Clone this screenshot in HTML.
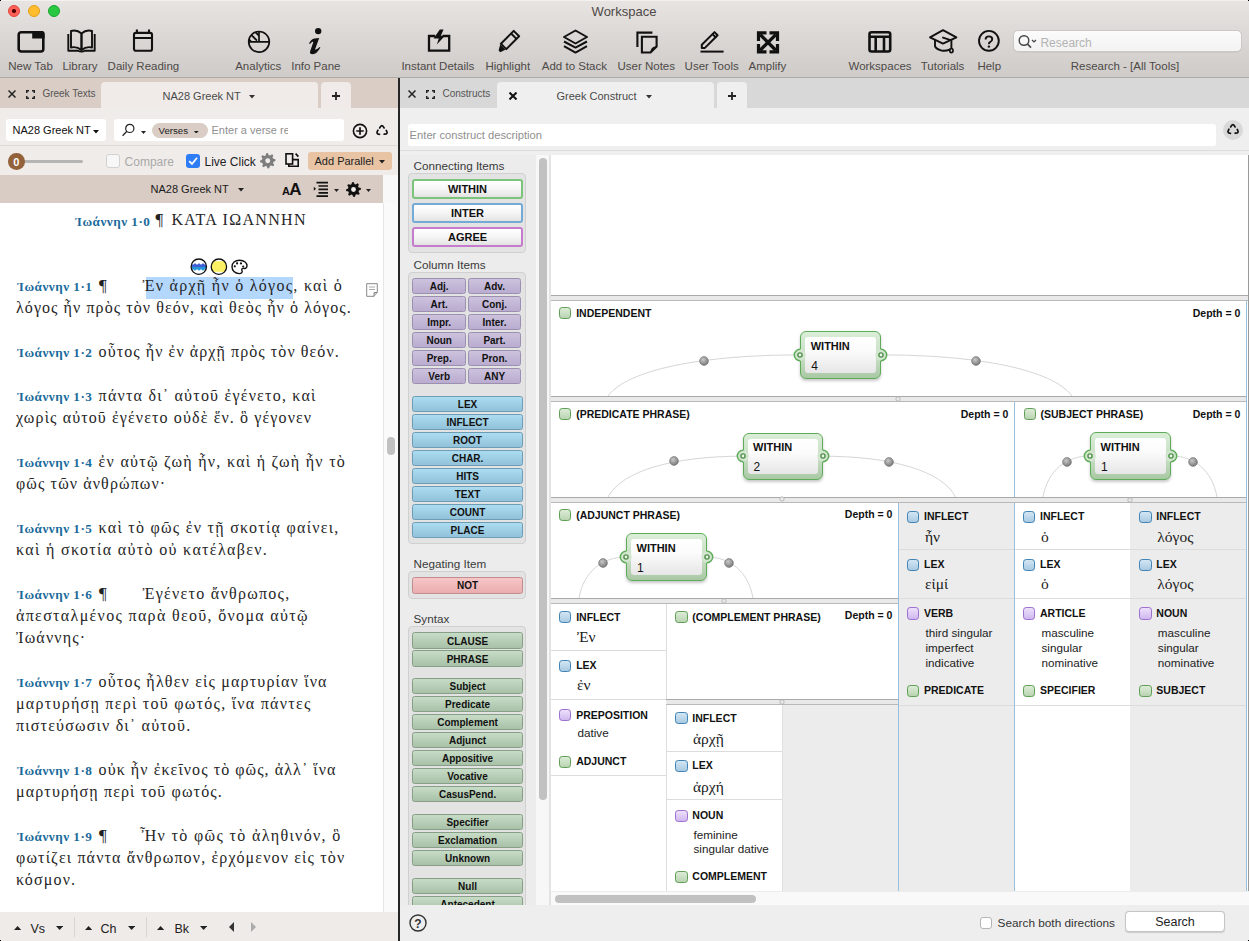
<!DOCTYPE html><html><head><meta charset="utf-8"><style>
html,body{margin:0;padding:0;}
body{width:1249px;height:941px;overflow:hidden;position:relative;background:#efefef;font-family:"Liberation Sans",sans-serif;}
.t{position:absolute;white-space:nowrap;}
.r{position:absolute;box-sizing:border-box;}
</style></head><body>
<div class="r" style="left:0px;top:0px;width:1249px;height:77px;background:linear-gradient(#e8e4e1,#dcd8d5 45%,#cfcbc8);"></div>
<div class="r" style="left:0px;top:77px;width:1249px;height:1px;background:#aeaaa7;"></div>
<div class="r" style="left:0px;top:0px;width:1249px;height:1px;background:#f4f2f0;"></div>
<div class="r" style="left:8px;top:5px;width:12px;height:12px;border-radius:50%;background:#fe5f57;border:0.5px solid #e2463f;"></div>
<div class="r" style="left:28px;top:5px;width:12px;height:12px;border-radius:50%;background:#febc2e;border:0.5px solid #e1a116;"></div>
<div class="r" style="left:48px;top:5px;width:12px;height:12px;border-radius:50%;background:#28c840;border:0.5px solid #17a52e;"></div>
<div class="r" style="left:12.3px;top:9.3px;width:3.4px;height:3.4px;border-radius:50%;background:#4d0000;"></div>
<div class="t" style="left:324.00px;width:600px;text-align:center;top:4.50px;font-size:13px;line-height:13px;color:#4d4948;font-weight:normal;font-family:'Liberation Sans', sans-serif;">Workspace</div>
<div class="t" style="left:8.30px;top:61.27px;font-size:11.5px;line-height:11.5px;color:#4d4a48;font-weight:normal;font-family:'Liberation Sans', sans-serif;">New Tab</div>
<div class="t" style="left:62.40px;top:61.27px;font-size:11.5px;line-height:11.5px;color:#4d4a48;font-weight:normal;font-family:'Liberation Sans', sans-serif;">Library</div>
<div class="t" style="left:107.60px;top:61.27px;font-size:11.5px;line-height:11.5px;color:#4d4a48;font-weight:normal;font-family:'Liberation Sans', sans-serif;">Daily Reading</div>
<div class="t" style="left:235.20px;top:61.27px;font-size:11.5px;line-height:11.5px;color:#4d4a48;font-weight:normal;font-family:'Liberation Sans', sans-serif;">Analytics</div>
<div class="t" style="left:291.20px;top:61.27px;font-size:11.5px;line-height:11.5px;color:#4d4a48;font-weight:normal;font-family:'Liberation Sans', sans-serif;">Info Pane</div>
<div class="t" style="left:401.40px;top:61.27px;font-size:11.5px;line-height:11.5px;color:#4d4a48;font-weight:normal;font-family:'Liberation Sans', sans-serif;">Instant Details</div>
<div class="t" style="left:485.40px;top:61.27px;font-size:11.5px;line-height:11.5px;color:#4d4a48;font-weight:normal;font-family:'Liberation Sans', sans-serif;">Highlight</div>
<div class="t" style="left:541.80px;top:61.27px;font-size:11.5px;line-height:11.5px;color:#4d4a48;font-weight:normal;font-family:'Liberation Sans', sans-serif;">Add to Stack</div>
<div class="t" style="left:617.50px;top:61.27px;font-size:11.5px;line-height:11.5px;color:#4d4a48;font-weight:normal;font-family:'Liberation Sans', sans-serif;">User Notes</div>
<div class="t" style="left:684.60px;top:61.27px;font-size:11.5px;line-height:11.5px;color:#4d4a48;font-weight:normal;font-family:'Liberation Sans', sans-serif;">User Tools</div>
<div class="t" style="left:748.60px;top:61.27px;font-size:11.5px;line-height:11.5px;color:#4d4a48;font-weight:normal;font-family:'Liberation Sans', sans-serif;">Amplify</div>
<div class="t" style="left:848.50px;top:61.27px;font-size:11.5px;line-height:11.5px;color:#4d4a48;font-weight:normal;font-family:'Liberation Sans', sans-serif;">Workspaces</div>
<div class="t" style="left:920.70px;top:61.27px;font-size:11.5px;line-height:11.5px;color:#4d4a48;font-weight:normal;font-family:'Liberation Sans', sans-serif;">Tutorials</div>
<div class="t" style="left:977.40px;top:61.27px;font-size:11.5px;line-height:11.5px;color:#4d4a48;font-weight:normal;font-family:'Liberation Sans', sans-serif;">Help</div>
<div class="t" style="left:1070.70px;top:61.27px;font-size:11.5px;line-height:11.5px;color:#4d4a48;font-weight:normal;font-family:'Liberation Sans', sans-serif;">Research - [All Tools]</div>
<svg class="r" style="left:16px;top:29px;" width="30" height="26" viewBox="0 0 30 26"><rect x="2.7" y="3.3" width="24.6" height="19.2" rx="2.5" fill="none" stroke="#111" stroke-width="2.6"/><path d="M16.2 2 H25.8 Q28.6 2 28.6 4.8 V9.4 H16.2 Z" fill="#111"/></svg>
<svg class="r" style="left:66px;top:29px;" width="32" height="25" viewBox="0 0 32 25"><g fill="none" stroke="#111" stroke-width="1.9" stroke-linejoin="round"><path d="M15.5 4.5 C12.5 1.8 8 1.2 5 2 V18.5 C8 17.8 12.5 18.5 15.5 21 Z"/><path d="M15.5 4.5 C18.5 1.8 23 1.2 26 2 V18.5 C23 17.8 18.5 18.5 15.5 21 Z"/><path d="M2.3 5 V21.8 H12.5 C13.5 22.8 17.5 22.8 18.5 21.8 H28.7 V5"/></g></svg>
<svg class="r" style="left:132px;top:28px;" width="23" height="26" viewBox="0 0 23 26"><g fill="none" stroke="#111" stroke-width="2.1"><rect x="2" y="4.9" width="18" height="17.9" rx="1.8"/><path d="M2 10 H20 M4.9 1.6 V5 M17 1.6 V5"/></g></svg>
<svg class="r" style="left:246px;top:29px;" width="26" height="26" viewBox="0 0 26 26"><defs><clipPath id="q"><path d="M13 12.8 H2.7 A10.3 10.3 0 0 1 13 2.5 Z"/></clipPath></defs><g fill="none" stroke="#111"><circle cx="13" cy="12.8" r="10.3" stroke-width="1.7"/><path d="M2.7 12.8 H23.3 M13 2.5 V12.8" stroke-width="1.7"/><g clip-path="url(#q)" stroke-width="1.9"><path d="M0.5 8 L6.5 14 M3.5 4.2 L11 11.7 M7.5 1.2 L14 7.7"/></g></g></svg>
<svg class="r" style="left:304px;top:26px;" width="22" height="30" viewBox="0 0 22 30"><circle cx="14.2" cy="5.1" r="3.2" fill="#111"/><path d="M5 17.4 Q7.2 13 10.4 12.5 L15.2 12.1 L11.3 22.8 Q11 24 12 23.6 Q14 22.6 15.6 21 L16.4 21.6 Q12.8 28.3 8.6 28.3 Q5.2 28.3 6.2 25 L9.2 16.6 Q9.5 15.4 8.4 15.8 Q7 16.6 5.9 18 Z" fill="#111"/></svg>
<svg class="r" style="left:426px;top:28px;" width="26" height="26" viewBox="0 0 26 26"><path d="M9.2 8 H3 V22.6 H23.2 V8 H16.5" fill="none" stroke="#111" stroke-width="2.3"/><path d="M13.8 1.6 H17.6 L14.8 7.8 H19 L10.8 16.6 L12.8 10.4 H7.6 Z" fill="#111"/></svg>
<svg class="r" style="left:497px;top:29px;" width="25" height="25" viewBox="0 0 25 25"><g fill="none" stroke="#111" stroke-width="2" stroke-linejoin="round"><path d="M3.9 14.7 L16.7 1.9 L22.1 7.3 L9.3 20.1 Z"/><path d="M14.1 4.5 L19.5 9.9"/></g><path d="M3.2 15.6 L8.4 20.8 L3.2 23.2 L1.6 21.6 Z" fill="#111"/></svg>
<svg class="r" style="left:562px;top:29px;" width="27" height="26" viewBox="0 0 27 26"><g fill="none" stroke="#111" stroke-width="2" stroke-linejoin="round"><path d="M13.5 1.5 L25 8 L13.5 14.5 L2 8 Z"/><path d="M2 12.5 L13.5 18.6 L25 12.5"/><path d="M2 17.2 L13.5 23.6 L25 17.2"/></g></svg>
<svg class="r" style="left:635px;top:30px;" width="26" height="25" viewBox="0 0 26 25"><g fill="none" stroke="#111" stroke-width="2.1"><path d="M2.4 17 V2.6 H17.4"/><path d="M6.9 6.8 H21.6 V16.5 L15.5 22.5 H6.9 Z"/><path d="M16.3 22 Q16.3 17.2 21.3 17.2" stroke-width="1.6"/></g></svg>
<svg class="r" style="left:699px;top:30px;" width="27" height="25" viewBox="0 0 27 25"><g fill="none" stroke="#111" stroke-width="2" stroke-linejoin="round"><path d="M2.8 14.8 L13.5 4.1 L16.6 7.2 L5.9 17.9 H2.8 Z"/><path d="M13.5 4.1 L15.5 2.1 L18.6 5.2 L16.6 7.2"/></g><path d="M1.5 21.6 H24.6" stroke="#111" stroke-width="2"/></svg>
<svg class="r" style="left:755px;top:30px;" width="26" height="25" viewBox="0 0 26 25"><g fill="none" stroke="#111" stroke-width="3.2" stroke-linejoin="miter"><path d="M3.5 11 V2.9 H11.5"/><path d="M14.5 2.9 H22.5 V11"/><path d="M3.5 14 V21.9 H11.5"/><path d="M14.5 21.9 H22.5 V14"/></g><path d="M5.2 4.6 L20.8 20.2 M20.8 4.6 L5.2 20.2" stroke="#111" stroke-width="3.4"/></svg>
<svg class="r" style="left:866px;top:30px;" width="27" height="25" viewBox="0 0 27 25"><g fill="none" stroke="#111" stroke-width="2.6"><rect x="3.5" y="2.3" width="20.7" height="19.2" rx="2"/><path d="M3.5 6.8 H24.2 M9.7 6.8 V21.5 M18 6.8 V21.5"/></g></svg>
<svg class="r" style="left:928px;top:28px;" width="31" height="28" viewBox="0 0 31 28"><g fill="none" stroke="#111" stroke-width="1.9" stroke-linejoin="round" stroke-linecap="round"><path d="M15 2.2 L28.4 9.4 L15 15.6 L2 9.4 Z"/><path d="M7 12.6 V18.6 C10 23.2 17 23.6 21.5 21.6"/><path d="M15 9.6 L23.4 12.4 V20.2"/><ellipse cx="23.4" cy="22.6" rx="1.6" ry="2.1" stroke-width="1.7"/></g></svg>
<svg class="r" style="left:976px;top:29px;" width="26" height="26" viewBox="0 0 26 26"><circle cx="12.9" cy="11.8" r="9.9" fill="none" stroke="#111" stroke-width="1.9"/><path d="M9.6 10.4 Q9.6 7.4 12.9 7.4 Q16.2 7.4 16.2 10.2 Q16.2 12.1 14 13.1 Q12.9 13.6 12.9 15.2" fill="none" stroke="#111" stroke-width="1.9"/><circle cx="12.9" cy="17.6" r="1.2" fill="#111"/></svg>
<div class="r" style="left:1012.5px;top:30px;width:229px;height:22px;border-radius:5px;background:linear-gradient(#fbfbfb,#f3f3f3);border:1px solid #cbc7c4;box-shadow:0 0.5px 0.5px rgba(0,0,0,0.08);"></div>
<svg class="r" style="left:1017px;top:34px;" width="22" height="16" viewBox="0 0 22 16"><circle cx="7" cy="6.5" r="4.8" fill="none" stroke="#444" stroke-width="1.4"/><path d="M10.4 10 L14 13.6" stroke="#444" stroke-width="1.6"/><path d="M15 6 L17 8 L19 6" fill="none" stroke="#444" stroke-width="1.2"/></svg>
<div class="t" style="left:1040.40px;top:36.64px;font-size:12px;line-height:12px;color:#b3b3b3;font-weight:normal;font-family:'Liberation Sans', sans-serif;">Research</div>
<div class="r" style="left:0px;top:78px;width:398px;height:30px;background:#dacdc5;"></div>
<div class="r" style="left:101px;top:82px;width:217px;height:26px;background:#f0ebe8;border-radius:4px 4px 0 0;"></div>
<div class="r" style="left:321px;top:82px;width:30px;height:26px;background:#f0ebe8;border-radius:4px 4px 0 0;"></div>
<svg class="r" style="left:7.5px;top:90px;" width="8" height="8" viewBox="0 0 8 8"><path d="M0.5 0.5 L7.5 7.5 M7.5 0.5 L0.5 7.5" stroke="#222" stroke-width="1.5"/></svg>
<svg class="r" style="left:25.5px;top:89.5px;" width="9" height="9" viewBox="0 0 9 9"><path d="M0.75 3 V0.75 H3 M6 0.75 H8.25 V3 M8.25 6 V8.25 H6 M3 8.25 H0.75 V6" fill="none" stroke="#222" stroke-width="1.5"/></svg>
<div class="t" style="left:42.40px;top:88.93px;font-size:10px;line-height:10px;color:#555;font-weight:normal;font-family:'Liberation Sans', sans-serif;">Greek Texts</div>
<div class="t" style="left:162.50px;top:91.29px;font-size:11px;line-height:11px;color:#4a4a4a;font-weight:normal;font-family:'Liberation Sans', sans-serif;">NA28 Greek NT</div>
<svg class="r" style="left:249px;top:95px;" width="6" height="3.5" viewBox="0 0 6 3.5"><path d="M0 0 H6 L3.0 3.5 Z" fill="#333"/></svg>
<svg class="r" style="left:332.0px;top:92.2px;" width="8" height="8" viewBox="0 0 8 8"><path d="M4.0 0 V8 M0 4.0 H8" stroke="#222" stroke-width="1.8"/></svg>
<div class="r" style="left:0px;top:108px;width:398px;height:67px;background:#f0ecea;"></div>
<div class="r" style="left:6px;top:119px;width:100px;height:22px;background:#fff;border-radius:3px;"></div>
<div class="t" style="left:12.50px;top:125.29px;font-size:11px;line-height:11px;color:#111;font-weight:normal;font-family:'Liberation Sans', sans-serif;">NA28 Greek NT</div>
<svg class="r" style="left:92.5px;top:130px;" width="6" height="3.5" viewBox="0 0 6 3.5"><path d="M0 0 H6 L3.0 3.5 Z" fill="#111"/></svg>
<div class="r" style="left:114px;top:119px;width:230px;height:22px;background:#fff;border-radius:3px;"></div>
<svg class="r" style="left:121px;top:123px;" width="16" height="15" viewBox="0 0 16 15"><circle cx="8.8" cy="5.4" r="4.1" fill="none" stroke="#222" stroke-width="1.2"/><path d="M5.9 8.3 L1.6 12.7" stroke="#222" stroke-width="1.3"/></svg>
<svg class="r" style="left:141px;top:131px;" width="5" height="3" viewBox="0 0 5 3"><path d="M0 0 H5 L2.5 3 Z" fill="#222"/></svg>
<div class="r" style="left:151.5px;top:123px;width:56px;height:14.5px;background:#dacdc5;border-radius:8px;"></div>
<div class="t" style="left:158.60px;top:125.87px;font-size:9.6px;line-height:9.6px;color:#222;font-weight:normal;font-family:'Liberation Sans', sans-serif;">Verses</div>
<svg class="r" style="left:194.4px;top:130.6px;" width="4.6" height="2.8" viewBox="0 0 4.6 2.8"><path d="M0 0 H4.6 L2.3 2.8 Z" fill="#222"/></svg>
<div class="r" style="left:211px;top:119px;width:77px;height:22px;overflow:hidden;">
<div class="t" style="left:0.50px;top:5.89px;font-size:11px;line-height:11px;color:#8f8f8f;font-weight:normal;font-family:'Liberation Sans', sans-serif;">Enter a verse reference</div>
</div>
<svg class="r" style="left:352px;top:123px;" width="16" height="16" viewBox="0 0 16 16"><circle cx="8" cy="8" r="6.6" fill="none" stroke="#111" stroke-width="1.6"/><path d="M8 4.3 V11.7 M4.3 8 H11.7" stroke="#111" stroke-width="1.7"/></svg>
<svg class="r" style="left:374px;top:123px;" width="16" height="14" viewBox="0 0 16 14"><g fill="none" stroke="#111" stroke-width="1.7" stroke-linecap="round"><path d="M5.7 4.9 Q7.9 0.5 10.1 4.9"/><path d="M3.9 7.2 Q1.4 11.3 5.5 11.3"/><path d="M12.3 7.5 Q14.7 11.3 10.2 11.2"/></g></svg>
<div class="r" style="left:0px;top:145px;width:398px;height:1px;background:#dedad7;"></div>
<div class="r" style="left:16px;top:160px;width:67px;height:3px;background:#b7b5b3;border-radius:2px;"></div>
<div class="r" style="left:8px;top:153px;width:16.6px;height:16.6px;background:#93623a;border-radius:50%;"></div>
<div class="t" style="left:-283.70px;width:600px;text-align:center;top:156.99px;font-size:11px;line-height:11px;color:#fff;font-weight:bold;font-family:'Liberation Sans', sans-serif;">0</div>
<div class="r" style="left:106px;top:154px;width:14px;height:13.5px;background:#f7f7f7;border:1px solid #d2d2d2;border-radius:3px;"></div>
<div class="t" style="left:124.60px;top:156.24px;font-size:12px;line-height:12px;color:#a9a9a9;font-weight:normal;font-family:'Liberation Sans', sans-serif;">Compare</div>
<div class="r" style="left:186px;top:154px;width:14px;height:14px;background:#2f7df6;border-radius:3px;"></div>
<svg class="r" style="left:186px;top:154px;" width="14" height="14" viewBox="0 0 14 14"><path d="M3.2 7.2 L6 10 L11 3.8" fill="none" stroke="#fff" stroke-width="1.8"/></svg>
<div class="t" style="left:204.50px;top:156.24px;font-size:12px;line-height:12px;color:#222;font-weight:normal;font-family:'Liberation Sans', sans-serif;">Live Click</div>
<svg class="r" style="left:260.3px;top:153px;" width="15.5" height="15.5" viewBox="0 0 15.5 15.5"><polygon points="7.75,0.00 9.26,0.15 9.94,2.45 10.94,2.98 13.23,2.27 14.19,3.44 13.05,5.56 13.37,6.63 15.50,7.75 15.35,9.26 13.05,9.94 12.52,10.94 13.23,13.23 12.06,14.19 9.94,13.05 8.87,13.37 7.75,15.50 6.24,15.35 5.56,13.05 4.56,12.52 2.27,13.23 1.31,12.06 2.45,9.94 2.13,8.87 0.00,7.75 0.15,6.24 2.45,5.56 2.98,4.56 2.27,2.27 3.44,1.31 5.56,2.45 6.63,2.13" fill="#7d7d7d" transform="rotate(-11 7.75 7.75)"/><circle cx="7.75" cy="7.75" r="2.48" fill="#f0ecea"/></svg>
<svg class="r" style="left:284px;top:152px;" width="17" height="17" viewBox="0 0 17 17"><g fill="none" stroke="#111" stroke-width="1.6"><rect x="2" y="1.8" width="6.6" height="10.2"/><path d="M8.6 7.6 H14.2 V14.2 H4.8 V12"/><path d="M11.6 1.6 L14.4 4.6"/></g></svg>
<div class="r" style="left:308px;top:152px;width:84px;height:18px;background:#e8c4a4;border-radius:3px;"></div>
<div class="t" style="left:314.50px;top:155.69px;font-size:11px;line-height:11px;color:#222;font-weight:normal;font-family:'Liberation Sans', sans-serif;">Add Parallel</div>
<svg class="r" style="left:378.6px;top:160px;" width="6" height="3.5" viewBox="0 0 6 3.5"><path d="M0 0 H6 L3.0 3.5 Z" fill="#222"/></svg>
<div class="r" style="left:0px;top:175px;width:383px;height:28px;background:#d9ccc4;"></div>
<div class="r" style="left:383px;top:175px;width:15px;height:28px;background:#f8f8f8;"></div>
<div class="t" style="left:150.50px;top:184.29px;font-size:11px;line-height:11px;color:#1a1a1a;font-weight:normal;font-family:'Liberation Sans', sans-serif;">NA28 Greek NT</div>
<svg class="r" style="left:238px;top:188px;" width="6" height="3.5" viewBox="0 0 6 3.5"><path d="M0 0 H6 L3.0 3.5 Z" fill="#222"/></svg>
<div class="t" style="left:282.00px;top:185.89px;font-size:11px;line-height:11px;color:#111;font-weight:bold;font-family:'Liberation Sans', sans-serif;">A</div>
<div class="t" style="left:289.30px;top:180.81px;font-size:17px;line-height:17px;color:#111;font-weight:bold;font-family:'Liberation Sans', sans-serif;">A</div>
<svg class="r" style="left:313px;top:181px;" width="16" height="16" viewBox="0 0 16 16"><path d="M0.8 5.8 L3 7.8 L0.8 9.8 Z" fill="#111"/><g stroke="#111" stroke-width="1.7"><path d="M3.5 1.6 H15 M5.5 5 H15 M5.5 8.4 H15 M5.5 11.8 H15 M3.5 15.2 H15"/></g></svg>
<svg class="r" style="left:334px;top:188.5px;" width="5" height="3" viewBox="0 0 5 3"><path d="M0 0 H5 L2.5 3 Z" fill="#222"/></svg>
<div class="r" style="left:346px;top:182px;width:14px;height:14px;"></div>
<svg class="r" style="left:345.5px;top:181.5px;" width="15" height="15" viewBox="0 0 15 15"><polygon points="7.50,0.00 8.96,0.14 9.62,2.37 10.58,2.89 12.80,2.20 13.74,3.33 12.63,5.38 12.94,6.42 15.00,7.50 14.86,8.96 12.63,9.62 12.11,10.58 12.80,12.80 11.67,13.74 9.62,12.63 8.58,12.94 7.50,15.00 6.04,14.86 5.38,12.63 4.42,12.11 2.20,12.80 1.26,11.67 2.37,9.62 2.06,8.58 0.00,7.50 0.14,6.04 2.37,5.38 2.89,4.42 2.20,2.20 3.33,1.26 5.38,2.37 6.42,2.06" fill="#111" transform="rotate(-11 7.5 7.5)"/><circle cx="7.5" cy="7.5" r="2.4" fill="#f0ecea"/></svg>
<svg class="r" style="left:365.5px;top:188.5px;" width="5" height="3" viewBox="0 0 5 3"><path d="M0 0 H5 L2.5 3 Z" fill="#222"/></svg>
<div class="r" style="left:0px;top:203px;width:383px;height:709px;background:#fff;"></div>
<div class="r" style="left:383px;top:203px;width:15px;height:709px;background:#fafafa;border-left:1px solid #e6e6e6;"></div>
<div class="r" style="left:387px;top:437px;width:8px;height:18px;background:#c1c1c1;border-radius:4px;"></div>
<div class="t" style="left:75.00px;top:214.55px;font-size:13.2px;line-height:13.2px;color:#1b6b9c;font-weight:bold;font-family:'Liberation Serif', serif;letter-spacing:0.5px;">Ἰωάννην 1·0</div>
<div class="t" style="left:155.50px;top:211.36px;font-size:17px;line-height:17px;color:#222;font-weight:normal;font-family:'Liberation Serif', serif;">¶</div>
<div class="t" style="left:171.50px;top:212.20px;font-size:16px;line-height:16px;color:#262626;font-weight:normal;font-family:'Liberation Serif', serif;letter-spacing:1.32px;">ΚΑΤΑ ΙΩΑΝΝΗΝ</div>
<div class="r" style="left:146px;top:277px;width:147px;height:22px;background:#b4d7fe;"></div>
<div class="t" style="left:17.00px;top:280.25px;font-size:13.2px;line-height:13.2px;color:#1b6b9c;font-weight:bold;font-family:'Liberation Serif', serif;letter-spacing:0.5px;">Ἰωάννην 1·1</div>
<div class="t" style="left:99.00px;top:277.06px;font-size:17px;line-height:17px;color:#222;font-weight:normal;font-family:'Liberation Serif', serif;">¶</div>
<div class="t" style="left:142.50px;top:277.90px;font-size:16px;line-height:16px;color:#262626;font-weight:normal;font-family:'Liberation Serif', serif;letter-spacing:1.28px;">Ἐν ἀρχῇ ἦν ὁ λόγος, καὶ ὁ</div>
<div class="t" style="left:16.00px;top:299.90px;font-size:16px;line-height:16px;color:#262626;font-weight:normal;font-family:'Liberation Serif', serif;letter-spacing:1.073px;">λόγος ἦν πρὸς τὸν θεόν, καὶ θεὸς ἦν ὁ λόγος.</div>
<div class="t" style="left:17.00px;top:346.25px;font-size:13.2px;line-height:13.2px;color:#1b6b9c;font-weight:bold;font-family:'Liberation Serif', serif;letter-spacing:0.5px;">Ἰωάννην 1·2</div>
<div class="t" style="left:98.60px;top:343.90px;font-size:16px;line-height:16px;color:#262626;font-weight:normal;font-family:'Liberation Serif', serif;letter-spacing:1.079px;">οὗτος ἦν ἐν ἀρχῇ πρὸς τὸν θεόν.</div>
<div class="t" style="left:17.00px;top:390.25px;font-size:13.2px;line-height:13.2px;color:#1b6b9c;font-weight:bold;font-family:'Liberation Serif', serif;letter-spacing:0.5px;">Ἰωάννην 1·3</div>
<div class="t" style="left:98.60px;top:387.90px;font-size:16px;line-height:16px;color:#262626;font-weight:normal;font-family:'Liberation Serif', serif;letter-spacing:1.221px;">πάντα δι᾽ αὐτοῦ ἐγένετο, καὶ</div>
<div class="t" style="left:16.00px;top:409.90px;font-size:16px;line-height:16px;color:#262626;font-weight:normal;font-family:'Liberation Serif', serif;letter-spacing:1.12px;">χωρὶς αὐτοῦ ἐγένετο οὐδὲ ἕν. ὃ γέγονεν</div>
<div class="t" style="left:17.00px;top:456.25px;font-size:13.2px;line-height:13.2px;color:#1b6b9c;font-weight:bold;font-family:'Liberation Serif', serif;letter-spacing:0.5px;">Ἰωάννην 1·4</div>
<div class="t" style="left:98.60px;top:453.90px;font-size:16px;line-height:16px;color:#262626;font-weight:normal;font-family:'Liberation Serif', serif;letter-spacing:1.285px;">ἐν αὐτῷ ζωὴ ἦν, καὶ ἡ ζωὴ ἦν τὸ</div>
<div class="t" style="left:16.00px;top:475.90px;font-size:16px;line-height:16px;color:#262626;font-weight:normal;font-family:'Liberation Serif', serif;letter-spacing:1.12px;">φῶς τῶν ἀνθρώπων·</div>
<div class="t" style="left:17.00px;top:522.25px;font-size:13.2px;line-height:13.2px;color:#1b6b9c;font-weight:bold;font-family:'Liberation Serif', serif;letter-spacing:0.5px;">Ἰωάννην 1·5</div>
<div class="t" style="left:98.60px;top:519.90px;font-size:16px;line-height:16px;color:#262626;font-weight:normal;font-family:'Liberation Serif', serif;letter-spacing:1.273px;">καὶ τὸ φῶς ἐν τῇ σκοτίᾳ φαίνει,</div>
<div class="t" style="left:16.00px;top:541.90px;font-size:16px;line-height:16px;color:#262626;font-weight:normal;font-family:'Liberation Serif', serif;letter-spacing:1.335px;">καὶ ἡ σκοτία αὐτὸ οὐ κατέλαβεν.</div>
<div class="t" style="left:17.00px;top:588.25px;font-size:13.2px;line-height:13.2px;color:#1b6b9c;font-weight:bold;font-family:'Liberation Serif', serif;letter-spacing:0.5px;">Ἰωάννην 1·6</div>
<div class="t" style="left:99.00px;top:585.06px;font-size:17px;line-height:17px;color:#222;font-weight:normal;font-family:'Liberation Serif', serif;">¶</div>
<div class="t" style="left:142.50px;top:585.90px;font-size:16px;line-height:16px;color:#262626;font-weight:normal;font-family:'Liberation Serif', serif;letter-spacing:1.27px;">Ἐγένετο ἄνθρωπος,</div>
<div class="t" style="left:16.00px;top:607.90px;font-size:16px;line-height:16px;color:#262626;font-weight:normal;font-family:'Liberation Serif', serif;letter-spacing:1.326px;">ἀπεσταλμένος παρὰ θεοῦ, ὄνομα αὐτῷ</div>
<div class="t" style="left:16.00px;top:629.90px;font-size:16px;line-height:16px;color:#262626;font-weight:normal;font-family:'Liberation Serif', serif;letter-spacing:1.16px;">Ἰωάννης·</div>
<div class="t" style="left:17.00px;top:676.25px;font-size:13.2px;line-height:13.2px;color:#1b6b9c;font-weight:bold;font-family:'Liberation Serif', serif;letter-spacing:0.5px;">Ἰωάννην 1·7</div>
<div class="t" style="left:98.60px;top:673.90px;font-size:16px;line-height:16px;color:#262626;font-weight:normal;font-family:'Liberation Serif', serif;letter-spacing:1.178px;">οὗτος ἦλθεν εἰς μαρτυρίαν ἵνα</div>
<div class="t" style="left:16.00px;top:695.90px;font-size:16px;line-height:16px;color:#262626;font-weight:normal;font-family:'Liberation Serif', serif;letter-spacing:1.272px;">μαρτυρήσῃ περὶ τοῦ φωτός, ἵνα πάντες</div>
<div class="t" style="left:16.00px;top:717.90px;font-size:16px;line-height:16px;color:#262626;font-weight:normal;font-family:'Liberation Serif', serif;letter-spacing:1.187px;">πιστεύσωσιν δι᾽ αὐτοῦ.</div>
<div class="t" style="left:17.00px;top:764.25px;font-size:13.2px;line-height:13.2px;color:#1b6b9c;font-weight:bold;font-family:'Liberation Serif', serif;letter-spacing:0.5px;">Ἰωάννην 1·8</div>
<div class="t" style="left:98.60px;top:761.90px;font-size:16px;line-height:16px;color:#262626;font-weight:normal;font-family:'Liberation Serif', serif;letter-spacing:1.073px;">οὐκ ἦν ἐκεῖνος τὸ φῶς, ἀλλ᾽ ἵνα</div>
<div class="t" style="left:16.00px;top:783.90px;font-size:16px;line-height:16px;color:#262626;font-weight:normal;font-family:'Liberation Serif', serif;letter-spacing:1.13px;">μαρτυρήσῃ περὶ τοῦ φωτός.</div>
<div class="t" style="left:17.00px;top:830.25px;font-size:13.2px;line-height:13.2px;color:#1b6b9c;font-weight:bold;font-family:'Liberation Serif', serif;letter-spacing:0.5px;">Ἰωάννην 1·9</div>
<div class="t" style="left:99.00px;top:827.06px;font-size:17px;line-height:17px;color:#222;font-weight:normal;font-family:'Liberation Serif', serif;">¶</div>
<div class="t" style="left:140.00px;top:827.90px;font-size:16px;line-height:16px;color:#262626;font-weight:normal;font-family:'Liberation Serif', serif;letter-spacing:1.35px;">Ἦν τὸ φῶς τὸ ἀληθινόν, ὃ</div>
<div class="t" style="left:16.00px;top:849.90px;font-size:16px;line-height:16px;color:#262626;font-weight:normal;font-family:'Liberation Serif', serif;letter-spacing:1.154px;">φωτίζει πάντα ἄνθρωπον, ἐρχόμενον εἰς τὸν</div>
<div class="t" style="left:16.00px;top:871.90px;font-size:16px;line-height:16px;color:#262626;font-weight:normal;font-family:'Liberation Serif', serif;letter-spacing:1.15px;">κόσμον.</div>
<svg class="r" style="left:190px;top:258px;" width="18" height="18" viewBox="0 0 18 18"><defs><clipPath id="cc"><circle cx="8.8" cy="8.7" r="7.5"/></clipPath></defs><circle cx="8.8" cy="8.7" r="7.6" fill="#fff"/><g clip-path="url(#cc)"><path d="M0 5.9 Q1 4.7 2 5.9 T4 5.9 T6 5.9 T8 5.9 T10 5.9 T12 5.9 T14 5.9 T16 5.9 T18 5.9 V9 H0 Z" fill="#3d5ed4"/><path d="M0 9 H18 V11.9 Q17 13.1 16 11.9 T14 11.9 T12 11.9 T10 11.9 T8 11.9 T6 11.9 T4 11.9 T2 11.9 T0 11.9 Z" fill="#2597d6"/></g><circle cx="8.8" cy="8.7" r="7.7" fill="none" stroke="#111" stroke-width="1.3"/></svg>
<svg class="r" style="left:210px;top:258px;" width="18" height="18" viewBox="0 0 18 18"><defs><clipPath id="cy"><circle cx="8.9" cy="8.7" r="7.5"/></clipPath></defs><circle cx="8.9" cy="8.7" r="7.6" fill="#fff"/><rect x="0" y="3.2" width="18" height="10.6" fill="#fbf064" clip-path="url(#cy)"/><circle cx="8.9" cy="8.7" r="7.7" fill="none" stroke="#111" stroke-width="1.3"/></svg>
<svg class="r" style="left:231px;top:259px;" width="17" height="16" viewBox="0 0 17 16"><path d="M8.5 1.2 C13.5 1.2 16 4 16 7 C16 9.6 13.5 9.6 12.2 9.4 C10.8 9.3 10.4 10.4 11 11.6 C11.6 13 10.8 14.6 8.2 14.6 C3.8 14.6 1 11.5 1 7.8 C1 4 4 1.2 8.5 1.2 Z" fill="#fff" stroke="#111" stroke-width="1.4"/><g fill="#111"><circle cx="6.1" cy="4.4" r="1.1"/><circle cx="10" cy="4.4" r="1.1"/><circle cx="3.8" cy="7.3" r="1.1"/><circle cx="12.2" cy="7.5" r="1.1"/></g></svg>
<svg class="r" style="left:366px;top:283px;" width="12" height="14" viewBox="0 0 12 14"><path d="M0.7 0.7 H11.3 V9.5 L8 13.3 H0.7 Z" fill="#fff" stroke="#888" stroke-width="1"/><path d="M3 4 H9 M3 6.5 H9" stroke="#aaa" stroke-width="1"/><path d="M8 13.3 V9.5 H11.3" fill="#ccc" stroke="#888" stroke-width="1"/></svg>
<div class="r" style="left:0px;top:912px;width:398px;height:29px;background:#efebe8;"></div>
<svg class="r" style="left:14px;top:925.5px;" width="7.2" height="4" viewBox="0 0 7.2 4"><path d="M0 4 H7.2 L3.6 0 Z" fill="#222"/></svg>
<div class="t" style="left:30.50px;top:922.82px;font-size:12.5px;line-height:12.5px;color:#222;font-weight:normal;font-family:'Liberation Sans', sans-serif;">Vs</div>
<svg class="r" style="left:56px;top:926px;" width="7.2" height="4" viewBox="0 0 7.2 4"><path d="M0 0 H7.2 L3.6 4 Z" fill="#222"/></svg>
<div class="r" style="left:74px;top:917px;width:1px;height:20px;background:#d9d5d2;"></div>
<svg class="r" style="left:85.3px;top:925.5px;" width="7.2" height="4" viewBox="0 0 7.2 4"><path d="M0 4 H7.2 L3.6 0 Z" fill="#222"/></svg>
<div class="t" style="left:100.40px;top:922.82px;font-size:12.5px;line-height:12.5px;color:#222;font-weight:normal;font-family:'Liberation Sans', sans-serif;">Ch</div>
<svg class="r" style="left:127.6px;top:926px;" width="7.2" height="4" viewBox="0 0 7.2 4"><path d="M0 0 H7.2 L3.6 4 Z" fill="#222"/></svg>
<div class="r" style="left:146px;top:917px;width:1px;height:20px;background:#d9d5d2;"></div>
<svg class="r" style="left:157.4px;top:925.5px;" width="7.2" height="4" viewBox="0 0 7.2 4"><path d="M0 4 H7.2 L3.6 0 Z" fill="#222"/></svg>
<div class="t" style="left:174.40px;top:922.82px;font-size:12.5px;line-height:12.5px;color:#222;font-weight:normal;font-family:'Liberation Sans', sans-serif;">Bk</div>
<svg class="r" style="left:199.8px;top:926px;" width="7.2" height="4" viewBox="0 0 7.2 4"><path d="M0 0 H7.2 L3.6 4 Z" fill="#222"/></svg>
<svg class="r" style="left:229px;top:922px;" width="5" height="10" viewBox="0 0 5 10"><path d="M5 0 V10 L0 5 Z" fill="#333"/></svg>
<svg class="r" style="left:250.5px;top:922px;" width="5" height="10" viewBox="0 0 5 10"><path d="M0 0 V10 L5 5 Z" fill="#aaa"/></svg>
<div class="r" style="left:398px;top:78px;width:2px;height:863px;background:#262626;"></div>
<div class="r" style="left:400px;top:78px;width:849px;height:30px;background:#d8d8d8;"></div>
<div class="r" style="left:497px;top:82px;width:217px;height:26px;background:#efefef;border-radius:4px 4px 0 0;"></div>
<div class="r" style="left:717px;top:82px;width:30px;height:26px;background:#efefef;border-radius:4px 4px 0 0;"></div>
<svg class="r" style="left:407.5px;top:90px;" width="8" height="8" viewBox="0 0 8 8"><path d="M0.5 0.5 L7.5 7.5 M7.5 0.5 L0.5 7.5" stroke="#222" stroke-width="1.5"/></svg>
<svg class="r" style="left:425.5px;top:89.5px;" width="9" height="9" viewBox="0 0 9 9"><path d="M0.75 3 V0.75 H3 M6 0.75 H8.25 V3 M8.25 6 V8.25 H6 M3 8.25 H0.75 V6" fill="none" stroke="#222" stroke-width="1.5"/></svg>
<div class="t" style="left:442.50px;top:88.93px;font-size:10px;line-height:10px;color:#555;font-weight:normal;font-family:'Liberation Sans', sans-serif;">Constructs</div>
<svg class="r" style="left:509px;top:91.5px;" width="8" height="8" viewBox="0 0 8 8"><path d="M0.5 0.5 L7.5 7.5 M7.5 0.5 L0.5 7.5" stroke="#111" stroke-width="2"/></svg>
<div class="t" style="left:556.50px;top:91.29px;font-size:11px;line-height:11px;color:#4a4a4a;font-weight:normal;font-family:'Liberation Sans', sans-serif;">Greek Construct</div>
<svg class="r" style="left:646px;top:95px;" width="6" height="3.5" viewBox="0 0 6 3.5"><path d="M0 0 H6 L3.0 3.5 Z" fill="#333"/></svg>
<svg class="r" style="left:728.0px;top:92.2px;" width="8" height="8" viewBox="0 0 8 8"><path d="M4.0 0 V8 M0 4.0 H8" stroke="#222" stroke-width="1.8"/></svg>
<div class="r" style="left:400px;top:108px;width:849px;height:47px;background:#efefef;"></div>
<div class="r" style="left:408px;top:124px;width:808px;height:22px;background:#fff;border-radius:3px;"></div>
<div class="t" style="left:409.60px;top:130.32px;font-size:11.2px;line-height:11.2px;color:#8f8f8f;font-weight:normal;font-family:'Liberation Sans', sans-serif;">Enter construct description</div>
<div class="r" style="left:1223px;top:120px;width:20px;height:20px;background:#d9d9d9;border-radius:50%;"></div>
<svg class="r" style="left:1224.6px;top:122px;" width="16" height="14" viewBox="0 0 16 14"><g fill="none" stroke="#111" stroke-width="1.7" stroke-linecap="round"><path d="M5.7 4.9 Q7.9 0.5 10.1 4.9"/><path d="M3.9 7.2 Q1.4 11.3 5.5 11.3"/><path d="M12.3 7.5 Q14.7 11.3 10.2 11.2"/></g></svg>
<div class="r" style="left:400px;top:150px;width:849px;height:1px;background:#dddddd;"></div>
<div class="r" style="left:400px;top:155px;width:136px;height:750px;background:#ececec;"></div>
<div class="r" style="left:536px;top:155px;width:13px;height:750px;background:#f7f7f7;"></div>
<div class="r" style="left:539px;top:158px;width:8px;height:642px;background:#c1c1c1;border-radius:4px;"></div>
<div class="r" style="left:549px;top:155px;width:2px;height:750px;background:#e3e3e3;"></div>
<div class="t" style="left:413.50px;top:159.90px;font-size:11.7px;line-height:11.7px;color:#3a3a3a;font-weight:normal;font-family:'Liberation Sans', sans-serif;">Connecting Items</div>
<div class="t" style="left:413.50px;top:259.10px;font-size:11.7px;line-height:11.7px;color:#3a3a3a;font-weight:normal;font-family:'Liberation Sans', sans-serif;">Column Items</div>
<div class="t" style="left:413.50px;top:557.50px;font-size:11.7px;line-height:11.7px;color:#3a3a3a;font-weight:normal;font-family:'Liberation Sans', sans-serif;">Negating Item</div>
<div class="t" style="left:413.50px;top:612.80px;font-size:11.7px;line-height:11.7px;color:#3a3a3a;font-weight:normal;font-family:'Liberation Sans', sans-serif;">Syntax</div>
<div class="r" style="left:408.3px;top:172.6px;width:118px;height:80.7px;background:#e3e3e3;border:1.5px solid #d0d0d0;border-radius:4px;"></div>
<div class="r" style="left:408.3px;top:271.8px;width:118px;height:272.2px;background:#e3e3e3;border:1.5px solid #d0d0d0;border-radius:4px;"></div>
<div class="r" style="left:408.3px;top:570.5px;width:118px;height:28.7px;background:#e3e3e3;border:1.5px solid #d0d0d0;border-radius:4px;"></div>
<div class="r" style="left:408.3px;top:625.5px;width:118px;height:300px;background:#e3e3e3;border:1.5px solid #d0d0d0;border-radius:4px;"></div>
<div class="r" style="left:412.4px;top:178.7px;width:110.3px;height:20.7px;background:linear-gradient(#ffffff,#f4f4f4 55%,#e3e3e3);border:2px solid #7cc47a;border-radius:3px;"></div>
<div class="t" style="left:167.50px;width:600px;text-align:center;top:183.99px;font-size:11px;line-height:11px;color:#111;font-weight:bold;font-family:'Liberation Sans', sans-serif;">WITHIN</div>
<div class="r" style="left:412.4px;top:202.7px;width:110.3px;height:20.7px;background:linear-gradient(#ffffff,#f4f4f4 55%,#e3e3e3);border:2px solid #74aad6;border-radius:3px;"></div>
<div class="t" style="left:167.50px;width:600px;text-align:center;top:207.99px;font-size:11px;line-height:11px;color:#111;font-weight:bold;font-family:'Liberation Sans', sans-serif;">INTER</div>
<div class="r" style="left:412.4px;top:226.5px;width:110.3px;height:20.7px;background:linear-gradient(#ffffff,#f4f4f4 55%,#e3e3e3);border:2px solid #c67ccc;border-radius:3px;"></div>
<div class="t" style="left:167.50px;width:600px;text-align:center;top:231.79px;font-size:11px;line-height:11px;color:#111;font-weight:bold;font-family:'Liberation Sans', sans-serif;">AGREE</div>
<div class="r" style="left:412.4px;top:277.6px;width:53.6px;height:16.5px;background:linear-gradient(#cdc2dd,#b9acd0);border:1px solid #9c90b0;border-radius:2.5px;"></div>
<div class="t" style="left:139.20px;width:600px;text-align:center;top:281.94px;font-size:10px;line-height:10px;color:#111;font-weight:bold;font-family:'Liberation Sans', sans-serif;">Adj.</div>
<div class="r" style="left:467.7px;top:277.6px;width:53.6px;height:16.5px;background:linear-gradient(#cdc2dd,#b9acd0);border:1px solid #9c90b0;border-radius:2.5px;"></div>
<div class="t" style="left:194.50px;width:600px;text-align:center;top:281.94px;font-size:10px;line-height:10px;color:#111;font-weight:bold;font-family:'Liberation Sans', sans-serif;">Adv.</div>
<div class="r" style="left:412.4px;top:295.6px;width:53.6px;height:16.5px;background:linear-gradient(#cdc2dd,#b9acd0);border:1px solid #9c90b0;border-radius:2.5px;"></div>
<div class="t" style="left:139.20px;width:600px;text-align:center;top:299.94px;font-size:10px;line-height:10px;color:#111;font-weight:bold;font-family:'Liberation Sans', sans-serif;">Art.</div>
<div class="r" style="left:467.7px;top:295.6px;width:53.6px;height:16.5px;background:linear-gradient(#cdc2dd,#b9acd0);border:1px solid #9c90b0;border-radius:2.5px;"></div>
<div class="t" style="left:194.50px;width:600px;text-align:center;top:299.94px;font-size:10px;line-height:10px;color:#111;font-weight:bold;font-family:'Liberation Sans', sans-serif;">Conj.</div>
<div class="r" style="left:412.4px;top:313.6px;width:53.6px;height:16.5px;background:linear-gradient(#cdc2dd,#b9acd0);border:1px solid #9c90b0;border-radius:2.5px;"></div>
<div class="t" style="left:139.20px;width:600px;text-align:center;top:317.94px;font-size:10px;line-height:10px;color:#111;font-weight:bold;font-family:'Liberation Sans', sans-serif;">Impr.</div>
<div class="r" style="left:467.7px;top:313.6px;width:53.6px;height:16.5px;background:linear-gradient(#cdc2dd,#b9acd0);border:1px solid #9c90b0;border-radius:2.5px;"></div>
<div class="t" style="left:194.50px;width:600px;text-align:center;top:317.94px;font-size:10px;line-height:10px;color:#111;font-weight:bold;font-family:'Liberation Sans', sans-serif;">Inter.</div>
<div class="r" style="left:412.4px;top:331.6px;width:53.6px;height:16.5px;background:linear-gradient(#cdc2dd,#b9acd0);border:1px solid #9c90b0;border-radius:2.5px;"></div>
<div class="t" style="left:139.20px;width:600px;text-align:center;top:335.94px;font-size:10px;line-height:10px;color:#111;font-weight:bold;font-family:'Liberation Sans', sans-serif;">Noun</div>
<div class="r" style="left:467.7px;top:331.6px;width:53.6px;height:16.5px;background:linear-gradient(#cdc2dd,#b9acd0);border:1px solid #9c90b0;border-radius:2.5px;"></div>
<div class="t" style="left:194.50px;width:600px;text-align:center;top:335.94px;font-size:10px;line-height:10px;color:#111;font-weight:bold;font-family:'Liberation Sans', sans-serif;">Part.</div>
<div class="r" style="left:412.4px;top:349.6px;width:53.6px;height:16.5px;background:linear-gradient(#cdc2dd,#b9acd0);border:1px solid #9c90b0;border-radius:2.5px;"></div>
<div class="t" style="left:139.20px;width:600px;text-align:center;top:353.94px;font-size:10px;line-height:10px;color:#111;font-weight:bold;font-family:'Liberation Sans', sans-serif;">Prep.</div>
<div class="r" style="left:467.7px;top:349.6px;width:53.6px;height:16.5px;background:linear-gradient(#cdc2dd,#b9acd0);border:1px solid #9c90b0;border-radius:2.5px;"></div>
<div class="t" style="left:194.50px;width:600px;text-align:center;top:353.94px;font-size:10px;line-height:10px;color:#111;font-weight:bold;font-family:'Liberation Sans', sans-serif;">Pron.</div>
<div class="r" style="left:412.4px;top:367.6px;width:53.6px;height:16.5px;background:linear-gradient(#cdc2dd,#b9acd0);border:1px solid #9c90b0;border-radius:2.5px;"></div>
<div class="t" style="left:139.20px;width:600px;text-align:center;top:371.94px;font-size:10px;line-height:10px;color:#111;font-weight:bold;font-family:'Liberation Sans', sans-serif;">Verb</div>
<div class="r" style="left:467.7px;top:367.6px;width:53.6px;height:16.5px;background:linear-gradient(#cdc2dd,#b9acd0);border:1px solid #9c90b0;border-radius:2.5px;"></div>
<div class="t" style="left:194.50px;width:600px;text-align:center;top:371.94px;font-size:10px;line-height:10px;color:#111;font-weight:bold;font-family:'Liberation Sans', sans-serif;">ANY</div>
<div class="r" style="left:412.4px;top:395.5px;width:110.3px;height:16.5px;background:linear-gradient(#acdcf0,#92c2da);border:1px solid #6d9db6;border-radius:2.5px;"></div>
<div class="t" style="left:167.55px;width:600px;text-align:center;top:399.84px;font-size:10px;line-height:10px;color:#111;font-weight:bold;font-family:'Liberation Sans', sans-serif;">LEX</div>
<div class="r" style="left:412.4px;top:413.5px;width:110.3px;height:16.5px;background:linear-gradient(#acdcf0,#92c2da);border:1px solid #6d9db6;border-radius:2.5px;"></div>
<div class="t" style="left:167.55px;width:600px;text-align:center;top:417.84px;font-size:10px;line-height:10px;color:#111;font-weight:bold;font-family:'Liberation Sans', sans-serif;">INFLECT</div>
<div class="r" style="left:412.4px;top:431.5px;width:110.3px;height:16.5px;background:linear-gradient(#acdcf0,#92c2da);border:1px solid #6d9db6;border-radius:2.5px;"></div>
<div class="t" style="left:167.55px;width:600px;text-align:center;top:435.84px;font-size:10px;line-height:10px;color:#111;font-weight:bold;font-family:'Liberation Sans', sans-serif;">ROOT</div>
<div class="r" style="left:412.4px;top:449.5px;width:110.3px;height:16.5px;background:linear-gradient(#acdcf0,#92c2da);border:1px solid #6d9db6;border-radius:2.5px;"></div>
<div class="t" style="left:167.55px;width:600px;text-align:center;top:453.84px;font-size:10px;line-height:10px;color:#111;font-weight:bold;font-family:'Liberation Sans', sans-serif;">CHAR.</div>
<div class="r" style="left:412.4px;top:467.5px;width:110.3px;height:16.5px;background:linear-gradient(#acdcf0,#92c2da);border:1px solid #6d9db6;border-radius:2.5px;"></div>
<div class="t" style="left:167.55px;width:600px;text-align:center;top:471.84px;font-size:10px;line-height:10px;color:#111;font-weight:bold;font-family:'Liberation Sans', sans-serif;">HITS</div>
<div class="r" style="left:412.4px;top:485.5px;width:110.3px;height:16.5px;background:linear-gradient(#acdcf0,#92c2da);border:1px solid #6d9db6;border-radius:2.5px;"></div>
<div class="t" style="left:167.55px;width:600px;text-align:center;top:489.84px;font-size:10px;line-height:10px;color:#111;font-weight:bold;font-family:'Liberation Sans', sans-serif;">TEXT</div>
<div class="r" style="left:412.4px;top:503.5px;width:110.3px;height:16.5px;background:linear-gradient(#acdcf0,#92c2da);border:1px solid #6d9db6;border-radius:2.5px;"></div>
<div class="t" style="left:167.55px;width:600px;text-align:center;top:507.84px;font-size:10px;line-height:10px;color:#111;font-weight:bold;font-family:'Liberation Sans', sans-serif;">COUNT</div>
<div class="r" style="left:412.4px;top:521.5px;width:110.3px;height:16.5px;background:linear-gradient(#acdcf0,#92c2da);border:1px solid #6d9db6;border-radius:2.5px;"></div>
<div class="t" style="left:167.55px;width:600px;text-align:center;top:525.83px;font-size:10px;line-height:10px;color:#111;font-weight:bold;font-family:'Liberation Sans', sans-serif;">PLACE</div>
<div class="r" style="left:412.4px;top:577px;width:110.3px;height:16.5px;background:linear-gradient(#f6c6c7,#eaadaf);border:1px solid #c38c8e;border-radius:2.5px;"></div>
<div class="t" style="left:167.55px;width:600px;text-align:center;top:581.33px;font-size:10px;line-height:10px;color:#111;font-weight:bold;font-family:'Liberation Sans', sans-serif;">NOT</div>
<div class="r" style="left:412.4px;top:632.4px;width:110.3px;height:16.5px;background:linear-gradient(#c7dcc6,#a9c1a8);border:1px solid #889f87;border-radius:2.5px;"></div>
<div class="t" style="left:167.55px;width:600px;text-align:center;top:636.73px;font-size:10px;line-height:10px;color:#111;font-weight:bold;font-family:'Liberation Sans', sans-serif;">CLAUSE</div>
<div class="r" style="left:412.4px;top:650.2px;width:110.3px;height:16.5px;background:linear-gradient(#c7dcc6,#a9c1a8);border:1px solid #889f87;border-radius:2.5px;"></div>
<div class="t" style="left:167.55px;width:600px;text-align:center;top:654.53px;font-size:10px;line-height:10px;color:#111;font-weight:bold;font-family:'Liberation Sans', sans-serif;">PHRASE</div>
<div class="r" style="left:412.4px;top:677.7px;width:110.3px;height:16.5px;background:linear-gradient(#c7dcc6,#a9c1a8);border:1px solid #889f87;border-radius:2.5px;"></div>
<div class="t" style="left:167.55px;width:600px;text-align:center;top:682.03px;font-size:10px;line-height:10px;color:#111;font-weight:bold;font-family:'Liberation Sans', sans-serif;">Subject</div>
<div class="r" style="left:412.4px;top:695.7px;width:110.3px;height:16.5px;background:linear-gradient(#c7dcc6,#a9c1a8);border:1px solid #889f87;border-radius:2.5px;"></div>
<div class="t" style="left:167.55px;width:600px;text-align:center;top:700.03px;font-size:10px;line-height:10px;color:#111;font-weight:bold;font-family:'Liberation Sans', sans-serif;">Predicate</div>
<div class="r" style="left:412.4px;top:713.7px;width:110.3px;height:16.5px;background:linear-gradient(#c7dcc6,#a9c1a8);border:1px solid #889f87;border-radius:2.5px;"></div>
<div class="t" style="left:167.55px;width:600px;text-align:center;top:718.03px;font-size:10px;line-height:10px;color:#111;font-weight:bold;font-family:'Liberation Sans', sans-serif;">Complement</div>
<div class="r" style="left:412.4px;top:731.7px;width:110.3px;height:16.5px;background:linear-gradient(#c7dcc6,#a9c1a8);border:1px solid #889f87;border-radius:2.5px;"></div>
<div class="t" style="left:167.55px;width:600px;text-align:center;top:736.03px;font-size:10px;line-height:10px;color:#111;font-weight:bold;font-family:'Liberation Sans', sans-serif;">Adjunct</div>
<div class="r" style="left:412.4px;top:749.7px;width:110.3px;height:16.5px;background:linear-gradient(#c7dcc6,#a9c1a8);border:1px solid #889f87;border-radius:2.5px;"></div>
<div class="t" style="left:167.55px;width:600px;text-align:center;top:754.03px;font-size:10px;line-height:10px;color:#111;font-weight:bold;font-family:'Liberation Sans', sans-serif;">Appositive</div>
<div class="r" style="left:412.4px;top:767.7px;width:110.3px;height:16.5px;background:linear-gradient(#c7dcc6,#a9c1a8);border:1px solid #889f87;border-radius:2.5px;"></div>
<div class="t" style="left:167.55px;width:600px;text-align:center;top:772.03px;font-size:10px;line-height:10px;color:#111;font-weight:bold;font-family:'Liberation Sans', sans-serif;">Vocative</div>
<div class="r" style="left:412.4px;top:785.7px;width:110.3px;height:16.5px;background:linear-gradient(#c7dcc6,#a9c1a8);border:1px solid #889f87;border-radius:2.5px;"></div>
<div class="t" style="left:167.55px;width:600px;text-align:center;top:790.03px;font-size:10px;line-height:10px;color:#111;font-weight:bold;font-family:'Liberation Sans', sans-serif;">CasusPend.</div>
<div class="r" style="left:412.4px;top:813.6px;width:110.3px;height:16.5px;background:linear-gradient(#c7dcc6,#a9c1a8);border:1px solid #889f87;border-radius:2.5px;"></div>
<div class="t" style="left:167.55px;width:600px;text-align:center;top:817.93px;font-size:10px;line-height:10px;color:#111;font-weight:bold;font-family:'Liberation Sans', sans-serif;">Specifier</div>
<div class="r" style="left:412.4px;top:831.6px;width:110.3px;height:16.5px;background:linear-gradient(#c7dcc6,#a9c1a8);border:1px solid #889f87;border-radius:2.5px;"></div>
<div class="t" style="left:167.55px;width:600px;text-align:center;top:835.93px;font-size:10px;line-height:10px;color:#111;font-weight:bold;font-family:'Liberation Sans', sans-serif;">Exclamation</div>
<div class="r" style="left:412.4px;top:849.6px;width:110.3px;height:16.5px;background:linear-gradient(#c7dcc6,#a9c1a8);border:1px solid #889f87;border-radius:2.5px;"></div>
<div class="t" style="left:167.55px;width:600px;text-align:center;top:853.93px;font-size:10px;line-height:10px;color:#111;font-weight:bold;font-family:'Liberation Sans', sans-serif;">Unknown</div>
<div class="r" style="left:412.4px;top:877.6px;width:110.3px;height:16.5px;background:linear-gradient(#c7dcc6,#a9c1a8);border:1px solid #889f87;border-radius:2.5px;"></div>
<div class="t" style="left:167.55px;width:600px;text-align:center;top:881.93px;font-size:10px;line-height:10px;color:#111;font-weight:bold;font-family:'Liberation Sans', sans-serif;">Null</div>
<div class="r" style="left:412.4px;top:895.6px;width:110.3px;height:16.5px;background:linear-gradient(#c7dcc6,#a9c1a8);border:1px solid #889f87;border-radius:2.5px;"></div>
<div class="t" style="left:167.55px;width:600px;text-align:center;top:899.93px;font-size:10px;line-height:10px;color:#111;font-weight:bold;font-family:'Liberation Sans', sans-serif;">Antecedent</div>
<div class="r" style="left:400px;top:905px;width:849px;height:36px;background:#eeeeee;"></div>
<svg class="r" style="left:409px;top:914px;" width="18" height="18" viewBox="0 0 18 18"><circle cx="9" cy="9" r="8" fill="none" stroke="#333" stroke-width="1.4"/></svg>
<div class="t" style="left:118.00px;width:600px;text-align:center;top:917.94px;font-size:12px;line-height:12px;color:#333;font-weight:bold;font-family:'Liberation Sans', sans-serif;">?</div>
<div class="r" style="left:980px;top:917.4px;width:12px;height:12px;background:#fff;border:1px solid #b5b5b5;border-radius:3px;"></div>
<div class="t" style="left:997.60px;top:917.61px;font-size:11.8px;line-height:11.8px;color:#333;font-weight:normal;font-family:'Liberation Sans', sans-serif;">Search both directions</div>
<div class="r" style="left:1124.6px;top:911.2px;width:100.6px;height:20.4px;background:#fff;border:1px solid #c6c6c6;border-radius:4px;box-shadow:0 0.5px 1px rgba(0,0,0,0.15);"></div>
<div class="t" style="left:875.00px;width:600px;text-align:center;top:916.22px;font-size:12.5px;line-height:12.5px;color:#222;font-weight:normal;font-family:'Liberation Sans', sans-serif;">Search</div>
<div class="r" style="left:551px;top:155px;width:698px;height:736px;background:#fff;"></div>
<div class="r" style="left:1248px;top:155px;width:1px;height:736px;background:#9a9a9a;"></div>
<div class="r" style="left:551px;top:295px;width:697px;height:6px;background:#e9e9e9;border-top:1px solid #a9a9a9;border-bottom:1px solid #b9b9b9;"></div>
<div class="r" style="left:1246px;top:301px;width:1px;height:590px;background:#98bfdc;"></div>
<div class="r" style="left:559.2px;top:307.2px;width:12.3px;height:12.3px;background:linear-gradient(#dcecd7,#b9d4b2);border:1.5px solid #5f9f55;border-radius:3.2px;"></div>
<div class="t" style="left:576.20px;top:307.61px;font-size:10.5px;line-height:10.5px;color:#111;font-weight:bold;font-family:'Liberation Sans', sans-serif;">INDEPENDENT</div>
<div class="t" style="right:8.70px;top:307.71px;font-size:10.5px;line-height:10.5px;color:#111;font-weight:bold;font-family:'Liberation Sans', sans-serif;">Depth = 0</div>
<svg class="r" style="left:0px;top:0px;pointer-events:none;" width="1249" height="941" viewBox="0 0 1249 941"><path d="M800.2 354.9 C703.1 354.9 627.8 369.3 608.0 396.0 M880.9 354.9 C977.4 354.9 1052.3 369.3 1072.0 396.0" fill="none" stroke="#d6d6d6" stroke-width="1"/></svg>
<svg class="r" style="left:699px;top:355.8px;" width="10" height="10" viewBox="0 0 10 10"><defs><radialGradient id="gk" cx="40%" cy="35%" r="65%"><stop offset="0" stop-color="#c8c8c8"/><stop offset="1" stop-color="#7a7a7a"/></radialGradient></defs><circle cx="5" cy="5" r="4.4" fill="url(#gk)" stroke="#6f6f6f" stroke-width="0.6"/></svg>
<svg class="r" style="left:971px;top:356px;" width="10" height="10" viewBox="0 0 10 10"><defs><radialGradient id="gk" cx="40%" cy="35%" r="65%"><stop offset="0" stop-color="#c8c8c8"/><stop offset="1" stop-color="#7a7a7a"/></radialGradient></defs><circle cx="5" cy="5" r="4.4" fill="url(#gk)" stroke="#6f6f6f" stroke-width="0.6"/></svg>
<div class="r" style="left:800.2px;top:331.3px;width:80.7px;height:47.3px;background:linear-gradient(#dbeed8,#c4dcc0 60%,#a9c8a5);border:1.6px solid #5eab59;border-radius:6px;box-shadow:0 2px 3px rgba(0,0,0,0.22);"></div>
<div class="r" style="left:805.2px;top:337.3px;width:70.7px;height:35.8px;background:linear-gradient(#ffffff,#fbfbfb 40%,#e6e6e6);border-radius:3px;"></div>
<svg class="r" style="left:793.2px;top:347.95px;" width="14" height="14" viewBox="0 0 14 14"><circle cx="7" cy="7" r="5.7" fill="#d3e6cf"/><path d="M7 1.3 A5.7 5.7 0 0 0 7 12.7" fill="none" stroke="#5eab59" stroke-width="1.5"/><circle cx="7" cy="7" r="2.1" fill="#eef5ec" stroke="#4f8f4a" stroke-width="1.4"/></svg>
<svg class="r" style="left:873.9000000000001px;top:347.95px;" width="14" height="14" viewBox="0 0 14 14"><circle cx="7" cy="7" r="5.7" fill="#d3e6cf"/><path d="M7 1.3 A5.7 5.7 0 0 1 7 12.7" fill="none" stroke="#5eab59" stroke-width="1.5"/><circle cx="7" cy="7" r="2.1" fill="#eef5ec" stroke="#4f8f4a" stroke-width="1.4"/></svg>
<div class="t" style="left:810.70px;top:341.19px;font-size:11px;line-height:11px;color:#111;font-weight:bold;font-family:'Liberation Sans', sans-serif;">WITHIN</div>
<div class="t" style="left:811.20px;top:360.14px;font-size:12px;line-height:12px;color:#111;font-weight:normal;font-family:'Liberation Sans', sans-serif;">4</div>
<div class="r" style="left:551px;top:396px;width:695px;height:6px;background:#e9e9e9;border-top:1px solid #a9a9a9;border-bottom:1px solid #b9b9b9;"></div>
<div class="r" style="left:559.2px;top:408.2px;width:12.3px;height:12.3px;background:linear-gradient(#dcecd7,#b9d4b2);border:1.5px solid #5f9f55;border-radius:3.2px;"></div>
<div class="t" style="left:576.20px;top:408.61px;font-size:10.5px;line-height:10.5px;color:#111;font-weight:bold;font-family:'Liberation Sans', sans-serif;">(PREDICATE PHRASE)</div>
<div class="t" style="right:240.70px;top:408.71px;font-size:10.5px;line-height:10.5px;color:#111;font-weight:bold;font-family:'Liberation Sans', sans-serif;">Depth = 0</div>
<div class="r" style="left:1014px;top:402px;width:1px;height:95px;background:#98bfdc;"></div>
<div class="r" style="left:1023.5px;top:408.2px;width:12.3px;height:12.3px;background:linear-gradient(#dcecd7,#b9d4b2);border:1.5px solid #5f9f55;border-radius:3.2px;"></div>
<div class="t" style="left:1040.50px;top:408.61px;font-size:10.5px;line-height:10.5px;color:#111;font-weight:bold;font-family:'Liberation Sans', sans-serif;">(SUBJECT PHRASE)</div>
<div class="t" style="right:8.70px;top:408.71px;font-size:10.5px;line-height:10.5px;color:#111;font-weight:bold;font-family:'Liberation Sans', sans-serif;">Depth = 0</div>
<svg class="r" style="left:0px;top:0px;pointer-events:none;" width="1249" height="941" viewBox="0 0 1249 941"><path d="M742.6 456.2 C674.6 456.2 621.9 470.5 608.0 497.0 M823.3 456.2 C890.1 456.2 942.0 470.5 955.6 497.0" fill="none" stroke="#d6d6d6" stroke-width="1"/></svg>
<svg class="r" style="left:669.3px;top:456.4px;" width="10" height="10" viewBox="0 0 10 10"><defs><radialGradient id="gk" cx="40%" cy="35%" r="65%"><stop offset="0" stop-color="#c8c8c8"/><stop offset="1" stop-color="#7a7a7a"/></radialGradient></defs><circle cx="5" cy="5" r="4.4" fill="url(#gk)" stroke="#6f6f6f" stroke-width="0.6"/></svg>
<svg class="r" style="left:884px;top:456.5px;" width="10" height="10" viewBox="0 0 10 10"><defs><radialGradient id="gk" cx="40%" cy="35%" r="65%"><stop offset="0" stop-color="#c8c8c8"/><stop offset="1" stop-color="#7a7a7a"/></radialGradient></defs><circle cx="5" cy="5" r="4.4" fill="url(#gk)" stroke="#6f6f6f" stroke-width="0.6"/></svg>
<div class="r" style="left:742.6px;top:432.6px;width:80.7px;height:47.3px;background:linear-gradient(#dbeed8,#c4dcc0 60%,#a9c8a5);border:1.6px solid #5eab59;border-radius:6px;box-shadow:0 2px 3px rgba(0,0,0,0.22);"></div>
<div class="r" style="left:747.6px;top:438.6px;width:70.7px;height:35.8px;background:linear-gradient(#ffffff,#fbfbfb 40%,#e6e6e6);border-radius:3px;"></div>
<svg class="r" style="left:735.6px;top:449.25px;" width="14" height="14" viewBox="0 0 14 14"><circle cx="7" cy="7" r="5.7" fill="#d3e6cf"/><path d="M7 1.3 A5.7 5.7 0 0 0 7 12.7" fill="none" stroke="#5eab59" stroke-width="1.5"/><circle cx="7" cy="7" r="2.1" fill="#eef5ec" stroke="#4f8f4a" stroke-width="1.4"/></svg>
<svg class="r" style="left:816.3000000000001px;top:449.25px;" width="14" height="14" viewBox="0 0 14 14"><circle cx="7" cy="7" r="5.7" fill="#d3e6cf"/><path d="M7 1.3 A5.7 5.7 0 0 1 7 12.7" fill="none" stroke="#5eab59" stroke-width="1.5"/><circle cx="7" cy="7" r="2.1" fill="#eef5ec" stroke="#4f8f4a" stroke-width="1.4"/></svg>
<div class="t" style="left:753.10px;top:442.49px;font-size:11px;line-height:11px;color:#111;font-weight:bold;font-family:'Liberation Sans', sans-serif;">WITHIN</div>
<div class="t" style="left:753.60px;top:461.44px;font-size:12px;line-height:12px;color:#111;font-weight:normal;font-family:'Liberation Sans', sans-serif;">2</div>
<svg class="r" style="left:0px;top:0px;pointer-events:none;" width="1249" height="941" viewBox="0 0 1249 941"><path d="M1090.0 455.9 C1066.3 455.9 1047.8 470.3 1043.0 497.0 M1170.7 455.9 C1194.1 455.9 1212.2 470.3 1217.0 497.0" fill="none" stroke="#d6d6d6" stroke-width="1"/></svg>
<svg class="r" style="left:1061.8px;top:456.6px;" width="10" height="10" viewBox="0 0 10 10"><defs><radialGradient id="gk" cx="40%" cy="35%" r="65%"><stop offset="0" stop-color="#c8c8c8"/><stop offset="1" stop-color="#7a7a7a"/></radialGradient></defs><circle cx="5" cy="5" r="4.4" fill="url(#gk)" stroke="#6f6f6f" stroke-width="0.6"/></svg>
<svg class="r" style="left:1187.8px;top:456.6px;" width="10" height="10" viewBox="0 0 10 10"><defs><radialGradient id="gk" cx="40%" cy="35%" r="65%"><stop offset="0" stop-color="#c8c8c8"/><stop offset="1" stop-color="#7a7a7a"/></radialGradient></defs><circle cx="5" cy="5" r="4.4" fill="url(#gk)" stroke="#6f6f6f" stroke-width="0.6"/></svg>
<div class="r" style="left:1090px;top:432.3px;width:80.7px;height:47.3px;background:linear-gradient(#dbeed8,#c4dcc0 60%,#a9c8a5);border:1.6px solid #5eab59;border-radius:6px;box-shadow:0 2px 3px rgba(0,0,0,0.22);"></div>
<div class="r" style="left:1095px;top:438.3px;width:70.7px;height:35.8px;background:linear-gradient(#ffffff,#fbfbfb 40%,#e6e6e6);border-radius:3px;"></div>
<svg class="r" style="left:1083px;top:448.95px;" width="14" height="14" viewBox="0 0 14 14"><circle cx="7" cy="7" r="5.7" fill="#d3e6cf"/><path d="M7 1.3 A5.7 5.7 0 0 0 7 12.7" fill="none" stroke="#5eab59" stroke-width="1.5"/><circle cx="7" cy="7" r="2.1" fill="#eef5ec" stroke="#4f8f4a" stroke-width="1.4"/></svg>
<svg class="r" style="left:1163.7px;top:448.95px;" width="14" height="14" viewBox="0 0 14 14"><circle cx="7" cy="7" r="5.7" fill="#d3e6cf"/><path d="M7 1.3 A5.7 5.7 0 0 1 7 12.7" fill="none" stroke="#5eab59" stroke-width="1.5"/><circle cx="7" cy="7" r="2.1" fill="#eef5ec" stroke="#4f8f4a" stroke-width="1.4"/></svg>
<div class="t" style="left:1100.50px;top:442.19px;font-size:11px;line-height:11px;color:#111;font-weight:bold;font-family:'Liberation Sans', sans-serif;">WITHIN</div>
<div class="t" style="left:1101.00px;top:461.14px;font-size:12px;line-height:12px;color:#111;font-weight:normal;font-family:'Liberation Sans', sans-serif;">1</div>
<div class="r" style="left:551px;top:497px;width:695px;height:6px;background:#e9e9e9;border-top:1px solid #a9a9a9;border-bottom:1px solid #b9b9b9;"></div>
<div class="r" style="left:559.2px;top:509.2px;width:12.3px;height:12.3px;background:linear-gradient(#dcecd7,#b9d4b2);border:1.5px solid #5f9f55;border-radius:3.2px;"></div>
<div class="t" style="left:576.20px;top:509.61px;font-size:10.5px;line-height:10.5px;color:#111;font-weight:bold;font-family:'Liberation Sans', sans-serif;">(ADJUNCT PHRASE)</div>
<div class="t" style="right:356.60px;top:509.21px;font-size:10.5px;line-height:10.5px;color:#111;font-weight:bold;font-family:'Liberation Sans', sans-serif;">Depth = 0</div>
<svg class="r" style="left:0px;top:0px;pointer-events:none;" width="1249" height="941" viewBox="0 0 1249 941"><path d="M626.0 557.0 C602.3 557.0 583.8 571.4 579.0 598.0 M706.7 557.0 C730.1 557.0 748.2 571.4 753.0 598.0" fill="none" stroke="#d6d6d6" stroke-width="1"/></svg>
<svg class="r" style="left:598.3px;top:557.7px;" width="10" height="10" viewBox="0 0 10 10"><defs><radialGradient id="gk" cx="40%" cy="35%" r="65%"><stop offset="0" stop-color="#c8c8c8"/><stop offset="1" stop-color="#7a7a7a"/></radialGradient></defs><circle cx="5" cy="5" r="4.4" fill="url(#gk)" stroke="#6f6f6f" stroke-width="0.6"/></svg>
<svg class="r" style="left:724px;top:557.7px;" width="10" height="10" viewBox="0 0 10 10"><defs><radialGradient id="gk" cx="40%" cy="35%" r="65%"><stop offset="0" stop-color="#c8c8c8"/><stop offset="1" stop-color="#7a7a7a"/></radialGradient></defs><circle cx="5" cy="5" r="4.4" fill="url(#gk)" stroke="#6f6f6f" stroke-width="0.6"/></svg>
<div class="r" style="left:626px;top:533.4px;width:80.7px;height:47.3px;background:linear-gradient(#dbeed8,#c4dcc0 60%,#a9c8a5);border:1.6px solid #5eab59;border-radius:6px;box-shadow:0 2px 3px rgba(0,0,0,0.22);"></div>
<div class="r" style="left:631px;top:539.4px;width:70.7px;height:35.8px;background:linear-gradient(#ffffff,#fbfbfb 40%,#e6e6e6);border-radius:3px;"></div>
<svg class="r" style="left:619px;top:550.05px;" width="14" height="14" viewBox="0 0 14 14"><circle cx="7" cy="7" r="5.7" fill="#d3e6cf"/><path d="M7 1.3 A5.7 5.7 0 0 0 7 12.7" fill="none" stroke="#5eab59" stroke-width="1.5"/><circle cx="7" cy="7" r="2.1" fill="#eef5ec" stroke="#4f8f4a" stroke-width="1.4"/></svg>
<svg class="r" style="left:699.7px;top:550.05px;" width="14" height="14" viewBox="0 0 14 14"><circle cx="7" cy="7" r="5.7" fill="#d3e6cf"/><path d="M7 1.3 A5.7 5.7 0 0 1 7 12.7" fill="none" stroke="#5eab59" stroke-width="1.5"/><circle cx="7" cy="7" r="2.1" fill="#eef5ec" stroke="#4f8f4a" stroke-width="1.4"/></svg>
<div class="t" style="left:636.50px;top:543.29px;font-size:11px;line-height:11px;color:#111;font-weight:bold;font-family:'Liberation Sans', sans-serif;">WITHIN</div>
<div class="t" style="left:637.00px;top:562.24px;font-size:12px;line-height:12px;color:#111;font-weight:normal;font-family:'Liberation Sans', sans-serif;">1</div>
<div class="r" style="left:551px;top:598px;width:347px;height:6px;background:#e9e9e9;border-top:1px solid #a9a9a9;border-bottom:1px solid #b9b9b9;"></div>
<div class="r" style="left:899px;top:503px;width:115px;height:388px;background:#ececec;"></div>
<div class="r" style="left:1130px;top:503px;width:116px;height:388px;background:#ececec;"></div>
<div class="r" style="left:898px;top:503px;width:1px;height:388px;background:#98bfdc;"></div>
<div class="r" style="left:1014px;top:503px;width:1px;height:388px;background:#98bfdc;"></div>
<div class="r" style="left:907px;top:510.6px;width:12.3px;height:12.3px;background:linear-gradient(#d3e6f3,#a9cae2);border:1.5px solid #3f82b6;border-radius:3.2px;"></div>
<div class="t" style="left:924.00px;top:511.01px;font-size:10.5px;line-height:10.5px;color:#111;font-weight:bold;font-family:'Liberation Sans', sans-serif;">INFLECT</div>
<div class="t" style="left:925.00px;top:528.82px;font-size:15.5px;line-height:15.5px;color:#1a1a1a;font-weight:normal;font-family:'Liberation Serif', serif;">ἦν</div>
<div class="r" style="left:899px;top:549px;width:115px;height:1px;background:#dcdcdc;"></div>
<div class="r" style="left:907px;top:558.6px;width:12.3px;height:12.3px;background:linear-gradient(#d3e6f3,#a9cae2);border:1.5px solid #3f82b6;border-radius:3.2px;"></div>
<div class="t" style="left:924.00px;top:559.01px;font-size:10.5px;line-height:10.5px;color:#111;font-weight:bold;font-family:'Liberation Sans', sans-serif;">LEX</div>
<div class="t" style="left:925.00px;top:576.22px;font-size:15.5px;line-height:15.5px;color:#1a1a1a;font-weight:normal;font-family:'Liberation Serif', serif;">εἰμί</div>
<div class="r" style="left:899px;top:597.5px;width:115px;height:1px;background:#dcdcdc;"></div>
<div class="r" style="left:907px;top:607.4px;width:12.3px;height:12.3px;background:linear-gradient(#ede0fa,#cfb8ef);border:1.5px solid #9c6fd0;border-radius:3.2px;"></div>
<div class="t" style="left:924.00px;top:607.81px;font-size:10.5px;line-height:10.5px;color:#111;font-weight:bold;font-family:'Liberation Sans', sans-serif;">VERB</div>
<div class="t" style="left:925.50px;top:627.10px;font-size:11.7px;line-height:11.7px;color:#222;font-weight:normal;font-family:'Liberation Sans', sans-serif;">third singular</div>
<div class="t" style="left:925.50px;top:641.80px;font-size:11.7px;line-height:11.7px;color:#222;font-weight:normal;font-family:'Liberation Sans', sans-serif;">imperfect</div>
<div class="t" style="left:925.50px;top:656.50px;font-size:11.7px;line-height:11.7px;color:#222;font-weight:normal;font-family:'Liberation Sans', sans-serif;">indicative</div>
<div class="r" style="left:907px;top:684.5px;width:12.3px;height:12.3px;background:linear-gradient(#dcecd7,#b9d4b2);border:1.5px solid #5f9f55;border-radius:3.2px;"></div>
<div class="t" style="left:924.00px;top:684.91px;font-size:10.5px;line-height:10.5px;color:#111;font-weight:bold;font-family:'Liberation Sans', sans-serif;">PREDICATE</div>
<div class="r" style="left:899px;top:704.5px;width:115px;height:1px;background:#dcdcdc;"></div>
<div class="r" style="left:1023px;top:510.6px;width:12.3px;height:12.3px;background:linear-gradient(#d3e6f3,#a9cae2);border:1.5px solid #3f82b6;border-radius:3.2px;"></div>
<div class="t" style="left:1040.00px;top:511.01px;font-size:10.5px;line-height:10.5px;color:#111;font-weight:bold;font-family:'Liberation Sans', sans-serif;">INFLECT</div>
<div class="t" style="left:1041.00px;top:528.82px;font-size:15.5px;line-height:15.5px;color:#1a1a1a;font-weight:normal;font-family:'Liberation Serif', serif;">ὁ</div>
<div class="r" style="left:1015px;top:549px;width:115px;height:1px;background:#dcdcdc;"></div>
<div class="r" style="left:1023px;top:558.6px;width:12.3px;height:12.3px;background:linear-gradient(#d3e6f3,#a9cae2);border:1.5px solid #3f82b6;border-radius:3.2px;"></div>
<div class="t" style="left:1040.00px;top:559.01px;font-size:10.5px;line-height:10.5px;color:#111;font-weight:bold;font-family:'Liberation Sans', sans-serif;">LEX</div>
<div class="t" style="left:1041.00px;top:576.22px;font-size:15.5px;line-height:15.5px;color:#1a1a1a;font-weight:normal;font-family:'Liberation Serif', serif;">ὁ</div>
<div class="r" style="left:1015px;top:597.5px;width:115px;height:1px;background:#dcdcdc;"></div>
<div class="r" style="left:1023px;top:607.4px;width:12.3px;height:12.3px;background:linear-gradient(#ede0fa,#cfb8ef);border:1.5px solid #9c6fd0;border-radius:3.2px;"></div>
<div class="t" style="left:1040.00px;top:607.81px;font-size:10.5px;line-height:10.5px;color:#111;font-weight:bold;font-family:'Liberation Sans', sans-serif;">ARTICLE</div>
<div class="t" style="left:1041.50px;top:627.10px;font-size:11.7px;line-height:11.7px;color:#222;font-weight:normal;font-family:'Liberation Sans', sans-serif;">masculine</div>
<div class="t" style="left:1041.50px;top:641.80px;font-size:11.7px;line-height:11.7px;color:#222;font-weight:normal;font-family:'Liberation Sans', sans-serif;">singular</div>
<div class="t" style="left:1041.50px;top:656.50px;font-size:11.7px;line-height:11.7px;color:#222;font-weight:normal;font-family:'Liberation Sans', sans-serif;">nominative</div>
<div class="r" style="left:1023px;top:684.5px;width:12.3px;height:12.3px;background:linear-gradient(#dcecd7,#b9d4b2);border:1.5px solid #5f9f55;border-radius:3.2px;"></div>
<div class="t" style="left:1040.00px;top:684.91px;font-size:10.5px;line-height:10.5px;color:#111;font-weight:bold;font-family:'Liberation Sans', sans-serif;">SPECIFIER</div>
<div class="r" style="left:1015px;top:704.5px;width:115px;height:1px;background:#dcdcdc;"></div>
<div class="r" style="left:1139.3px;top:510.6px;width:12.3px;height:12.3px;background:linear-gradient(#d3e6f3,#a9cae2);border:1.5px solid #3f82b6;border-radius:3.2px;"></div>
<div class="t" style="left:1156.30px;top:511.01px;font-size:10.5px;line-height:10.5px;color:#111;font-weight:bold;font-family:'Liberation Sans', sans-serif;">INFLECT</div>
<div class="t" style="left:1157.30px;top:528.82px;font-size:15.5px;line-height:15.5px;color:#1a1a1a;font-weight:normal;font-family:'Liberation Serif', serif;">λόγος</div>
<div class="r" style="left:1130px;top:549px;width:116px;height:1px;background:#dcdcdc;"></div>
<div class="r" style="left:1139.3px;top:558.6px;width:12.3px;height:12.3px;background:linear-gradient(#d3e6f3,#a9cae2);border:1.5px solid #3f82b6;border-radius:3.2px;"></div>
<div class="t" style="left:1156.30px;top:559.01px;font-size:10.5px;line-height:10.5px;color:#111;font-weight:bold;font-family:'Liberation Sans', sans-serif;">LEX</div>
<div class="t" style="left:1157.30px;top:576.22px;font-size:15.5px;line-height:15.5px;color:#1a1a1a;font-weight:normal;font-family:'Liberation Serif', serif;">λόγος</div>
<div class="r" style="left:1130px;top:597.5px;width:116px;height:1px;background:#dcdcdc;"></div>
<div class="r" style="left:1139.3px;top:607.4px;width:12.3px;height:12.3px;background:linear-gradient(#ede0fa,#cfb8ef);border:1.5px solid #9c6fd0;border-radius:3.2px;"></div>
<div class="t" style="left:1156.30px;top:607.81px;font-size:10.5px;line-height:10.5px;color:#111;font-weight:bold;font-family:'Liberation Sans', sans-serif;">NOUN</div>
<div class="t" style="left:1157.80px;top:627.10px;font-size:11.7px;line-height:11.7px;color:#222;font-weight:normal;font-family:'Liberation Sans', sans-serif;">masculine</div>
<div class="t" style="left:1157.80px;top:641.80px;font-size:11.7px;line-height:11.7px;color:#222;font-weight:normal;font-family:'Liberation Sans', sans-serif;">singular</div>
<div class="t" style="left:1157.80px;top:656.50px;font-size:11.7px;line-height:11.7px;color:#222;font-weight:normal;font-family:'Liberation Sans', sans-serif;">nominative</div>
<div class="r" style="left:1139.3px;top:684.5px;width:12.3px;height:12.3px;background:linear-gradient(#dcecd7,#b9d4b2);border:1.5px solid #5f9f55;border-radius:3.2px;"></div>
<div class="t" style="left:1156.30px;top:684.91px;font-size:10.5px;line-height:10.5px;color:#111;font-weight:bold;font-family:'Liberation Sans', sans-serif;">SUBJECT</div>
<div class="r" style="left:1130px;top:704.5px;width:116px;height:1px;background:#dcdcdc;"></div>
<div class="r" style="left:665.5px;top:604px;width:1px;height:287px;background:#dedede;"></div>
<div class="r" style="left:559.2px;top:611.2px;width:12.3px;height:12.3px;background:linear-gradient(#d3e6f3,#a9cae2);border:1.5px solid #3f82b6;border-radius:3.2px;"></div>
<div class="t" style="left:576.20px;top:611.61px;font-size:10.5px;line-height:10.5px;color:#111;font-weight:bold;font-family:'Liberation Sans', sans-serif;">INFLECT</div>
<div class="t" style="left:577.00px;top:628.52px;font-size:15.5px;line-height:15.5px;color:#1a1a1a;font-weight:normal;font-family:'Liberation Serif', serif;">Ἐν</div>
<div class="r" style="left:551px;top:650px;width:114.5px;height:1px;background:#dcdcdc;"></div>
<div class="r" style="left:559.2px;top:659.6px;width:12.3px;height:12.3px;background:linear-gradient(#d3e6f3,#a9cae2);border:1.5px solid #3f82b6;border-radius:3.2px;"></div>
<div class="t" style="left:576.20px;top:660.01px;font-size:10.5px;line-height:10.5px;color:#111;font-weight:bold;font-family:'Liberation Sans', sans-serif;">LEX</div>
<div class="t" style="left:577.00px;top:677.02px;font-size:15.5px;line-height:15.5px;color:#1a1a1a;font-weight:normal;font-family:'Liberation Serif', serif;">ἐν</div>
<div class="r" style="left:551px;top:698.5px;width:114.5px;height:1px;background:#dcdcdc;"></div>
<div class="r" style="left:559.2px;top:709.2px;width:12.3px;height:12.3px;background:linear-gradient(#ede0fa,#cfb8ef);border:1.5px solid #9c6fd0;border-radius:3.2px;"></div>
<div class="t" style="left:576.20px;top:709.61px;font-size:10.5px;line-height:10.5px;color:#111;font-weight:bold;font-family:'Liberation Sans', sans-serif;">PREPOSITION</div>
<div class="t" style="left:577.50px;top:727.40px;font-size:11.7px;line-height:11.7px;color:#222;font-weight:normal;font-family:'Liberation Sans', sans-serif;">dative</div>
<div class="r" style="left:559.2px;top:755.6px;width:12.3px;height:12.3px;background:linear-gradient(#dcecd7,#b9d4b2);border:1.5px solid #5f9f55;border-radius:3.2px;"></div>
<div class="t" style="left:576.20px;top:756.01px;font-size:10.5px;line-height:10.5px;color:#111;font-weight:bold;font-family:'Liberation Sans', sans-serif;">ADJUNCT</div>
<div class="r" style="left:551px;top:774.8px;width:114.5px;height:1px;background:#dcdcdc;"></div>
<div class="r" style="left:675.3px;top:611.2px;width:12.3px;height:12.3px;background:linear-gradient(#dcecd7,#b9d4b2);border:1.5px solid #5f9f55;border-radius:3.2px;"></div>
<div class="t" style="left:692.30px;top:611.61px;font-size:10.5px;line-height:10.5px;color:#111;font-weight:bold;font-family:'Liberation Sans', sans-serif;">(COMPLEMENT PHRASE)</div>
<div class="t" style="right:356.60px;top:610.11px;font-size:10.5px;line-height:10.5px;color:#111;font-weight:bold;font-family:'Liberation Sans', sans-serif;">Depth = 0</div>
<div class="r" style="left:666px;top:699px;width:232px;height:6px;background:#e9e9e9;border-top:1px solid #a9a9a9;border-bottom:1px solid #b9b9b9;"></div>
<div class="r" style="left:782px;top:705px;width:116px;height:186px;background:#ececec;"></div>
<div class="r" style="left:781.5px;top:705px;width:0.5px;height:186px;background:#e0e0e0;"></div>
<div class="r" style="left:675.3px;top:712.2px;width:12.3px;height:12.3px;background:linear-gradient(#d3e6f3,#a9cae2);border:1.5px solid #3f82b6;border-radius:3.2px;"></div>
<div class="t" style="left:692.30px;top:712.61px;font-size:10.5px;line-height:10.5px;color:#111;font-weight:bold;font-family:'Liberation Sans', sans-serif;">INFLECT</div>
<div class="t" style="left:693.00px;top:731.22px;font-size:15.5px;line-height:15.5px;color:#1a1a1a;font-weight:normal;font-family:'Liberation Serif', serif;">ἀρχῇ</div>
<div class="r" style="left:666px;top:751.2px;width:116px;height:1px;background:#dcdcdc;"></div>
<div class="r" style="left:675.3px;top:760px;width:12.3px;height:12.3px;background:linear-gradient(#d3e6f3,#a9cae2);border:1.5px solid #3f82b6;border-radius:3.2px;"></div>
<div class="t" style="left:692.30px;top:760.41px;font-size:10.5px;line-height:10.5px;color:#111;font-weight:bold;font-family:'Liberation Sans', sans-serif;">LEX</div>
<div class="t" style="left:693.00px;top:778.62px;font-size:15.5px;line-height:15.5px;color:#1a1a1a;font-weight:normal;font-family:'Liberation Serif', serif;">ἀρχή</div>
<div class="r" style="left:666px;top:799px;width:116px;height:1px;background:#dcdcdc;"></div>
<div class="r" style="left:675.3px;top:809.6px;width:12.3px;height:12.3px;background:linear-gradient(#ede0fa,#cfb8ef);border:1.5px solid #9c6fd0;border-radius:3.2px;"></div>
<div class="t" style="left:692.30px;top:810.01px;font-size:10.5px;line-height:10.5px;color:#111;font-weight:bold;font-family:'Liberation Sans', sans-serif;">NOUN</div>
<div class="t" style="left:693.50px;top:828.60px;font-size:11.7px;line-height:11.7px;color:#222;font-weight:normal;font-family:'Liberation Sans', sans-serif;">feminine</div>
<div class="t" style="left:693.50px;top:843.30px;font-size:11.7px;line-height:11.7px;color:#222;font-weight:normal;font-family:'Liberation Sans', sans-serif;">singular dative</div>
<div class="r" style="left:675.3px;top:871px;width:12.3px;height:12.3px;background:linear-gradient(#dcecd7,#b9d4b2);border:1.5px solid #5f9f55;border-radius:3.2px;"></div>
<div class="t" style="left:692.30px;top:871.41px;font-size:10.5px;line-height:10.5px;color:#111;font-weight:bold;font-family:'Liberation Sans', sans-serif;">COMPLEMENT</div>
<div class="r" style="left:551px;top:891px;width:698px;height:14px;background:#f9f9f9;border-top:1px solid #ececec;"></div>
<div class="r" style="left:554.5px;top:894.5px;width:201px;height:8.5px;background:#c1c1c1;border-radius:4.5px;"></div>
<svg class="r" style="left:895px;top:395.6px;" width="6" height="6" viewBox="0 0 6 6"><circle cx="3" cy="3" r="2.2" fill="#e8e8e8" stroke="#b0b0b0" stroke-width="0.8"/></svg>
<svg class="r" style="left:778.8px;top:496.3px;" width="6" height="6" viewBox="0 0 6 6"><circle cx="3" cy="3" r="2.2" fill="#e8e8e8" stroke="#b0b0b0" stroke-width="0.8"/></svg>
<svg class="r" style="left:1126.7px;top:496.8px;" width="6" height="6" viewBox="0 0 6 6"><circle cx="3" cy="3" r="2.2" fill="#e8e8e8" stroke="#b0b0b0" stroke-width="0.8"/></svg>
<svg class="r" style="left:721px;top:597.8px;" width="6" height="6" viewBox="0 0 6 6"><circle cx="3" cy="3" r="2.2" fill="#e8e8e8" stroke="#b0b0b0" stroke-width="0.8"/></svg>
<svg class="r" style="left:778.8px;top:698.7px;" width="6" height="6" viewBox="0 0 6 6"><circle cx="3" cy="3" r="2.2" fill="#e8e8e8" stroke="#b0b0b0" stroke-width="0.8"/></svg>
<div class="r" style="left:0px;top:0px;width:1px;height:1px;background:#000;"></div>
<div class="r" style="left:1248px;top:0px;width:1px;height:1px;background:#000;"></div>
<div class="r" style="left:0px;top:940px;width:1px;height:1px;background:#000;"></div>
<div class="r" style="left:1248px;top:940px;width:1px;height:1px;background:#000;"></div>
</body></html>
